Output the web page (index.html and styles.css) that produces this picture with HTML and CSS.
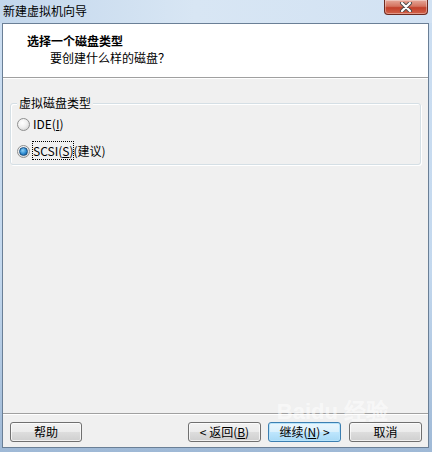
FILE: index.html
```html
<!DOCTYPE html>
<html lang="zh-CN">
<head>
<meta charset="utf-8">
<title>新建虚拟机向导</title>
<link rel="stylesheet" href="styles.css">
</head>
<body>
<div class="window">
  <div class="titlebar">
    <span class="title">新建虚拟机向导</span>
    <div class="close">
      <svg width="16" height="10" viewBox="0 0 16 10">
        <path d="M4 1 L12 9 M12 1 L4 9" stroke="#4a4a4a" stroke-width="4" stroke-linecap="round"/>
        <path d="M4 1 L12 9 M12 1 L4 9" stroke="#ffffff" stroke-width="2.2" stroke-linecap="round"/>
      </svg>
    </div>
  </div>
  <div class="client">
    <div class="header">
      <div class="h-title">选择一个磁盘类型</div>
      <div class="h-sub">要创建什么样的磁盘？</div>
    </div>
    <div class="body">
      <div class="group">
        <span class="legend">虚拟磁盘类型</span>
        <div class="radio-row">
          <span class="radio"></span>
          <span class="rlabel">IDE(<u>I</u>)</span>
        </div>
        <div class="radio-row">
          <span class="radio checked"></span>
          <span class="rlabel"><span class="focus">SCSI(<u>S</u>)</span>(建议)</span>
        </div>
      </div>
      <div class="watermark">Baidu 经验</div>
    </div>
    <div class="footer">
      <button class="btn help">帮助</button>
      <div class="spacer"></div>
      <button class="btn">&lt; 返回(<u>B</u>)</button>
      <button class="btn default">继续(<u>N</u>) &gt;</button>
      <button class="btn cancel">取消</button>
    </div>
  </div>
</div>
</body>
</html>
```
FILE: styles.css
```css
* { box-sizing: border-box; }
html, body { margin: 0; padding: 0; }
body {
  width: 432px;
  height: 452px;
  overflow: hidden;
  font-family: "Noto Sans CJK SC", "Liberation Sans", sans-serif;
  font-size: 12px;
  color: #000;
}
.window {
  width: 432px;
  height: 452px;
  display: flex;
  flex-direction: column;
  background: linear-gradient(to bottom, #cddff2 0%, #c3d8ee 60%, #9fb9d6 100%);
  padding: 0 3px 4px 2px;
}
.titlebar {
  height: 23px;
  display: flex;
  align-items: flex-start;
  justify-content: space-between;
  background: linear-gradient(to right, #c3d7ec 0%, #d8e6f4 45%, #d2e2f3 100%);
  margin: 0 -3px 0 -2px;
  padding: 0 4px 0 3px;
}
.title {
  line-height: 22px;
  font-size: 12px;
  color: #000;
}
.close {
  width: 44px;
  height: 15px;
  border: 1px solid #6d2a1f;
  border-top: none;
  border-radius: 0 0 4px 4px;
  background: linear-gradient(to bottom, #e6a899 0%, #d4735f 45%, #c2402a 55%, #d3634a 100%);
  display: flex;
  align-items: center;
  justify-content: center;
  box-shadow: inset 0 0 0 1px rgba(255,255,255,0.35);
}
.close svg { display: block; }
.client {
  flex: 1;
  display: flex;
  flex-direction: column;
  border: 1px solid #6a7f96;
  background: #f0f0f0;
}
.header {
  height: 54px;
  background: #ffffff;
  border-bottom: 1px solid #a0a0a0;
  padding: 8px 0 0 24px;
}
.h-title {
  font-weight: bold;
  line-height: 17px;
}
.h-sub {
  line-height: 17px;
  padding-left: 23px;
}
.body {
  flex: 1;
  position: relative;
  padding: 24px 7px 0 7px;
  border-top: 1px solid #ffffff;
}
.group {
  position: relative;
  height: 62px;
  border: 1px solid #d5dfe5;
  border-radius: 3px;
  box-shadow: inset 1px 1px 0 #ffffff, 1px 1px 0 #ffffff;
  padding: 13px 0 0 6px;
  display: flex;
  flex-direction: column;
  gap: 13px;
}
.legend {
  position: absolute;
  top: -9px;
  left: 6px;
  padding: 0 2px;
  background: #f0f0f0;
  line-height: 16px;
}
.radio-row {
  display: flex;
  align-items: center;
  height: 14px;
  gap: 3px;
}
.radio {
  width: 13px;
  height: 13px;
  border-radius: 50%;
  border: 1px solid #8e8f8f;
  background: radial-gradient(circle at 40% 35%, #ffffff 0%, #f0f0f0 45%, #c8c8c8 100%);
  display: flex;
  align-items: center;
  justify-content: center;
}
.radio.checked::after {
  content: "";
  width: 7px;
  height: 7px;
  border-radius: 50%;
  background: radial-gradient(circle at 40% 35%, #8fd3f8 0%, #2d8ad0 55%, #0c4e87 100%);
  border: 1px solid #1a4f80;
}
.rlabel {
  line-height: 14px;
}
.focus {
  outline: 1px dotted #000;
  outline-offset: 0;
}
u { text-decoration: underline; text-underline-offset: 1px; }
.watermark {
  position: absolute;
  right: 40px;
  bottom: -12px;
  font-family: "Liberation Sans", sans-serif;
  font-size: 22px;
  font-weight: bold;
  color: rgba(255,255,255,0.55);
  pointer-events: none;
}
.footer {
  height: 34px;
  border-top: 1px solid #a0a0a0;
  box-shadow: inset 0 1px 0 #ffffff;
  display: flex;
  align-items: flex-start;
  padding: 8px 6px 0 7px;
  gap: 7px;
}
.spacer { flex: 1; }
.btn {
  width: 73px;
  height: 20px;
  font-family: "Noto Sans CJK SC", "Liberation Sans", sans-serif;
  font-size: 12px;
  line-height: 16px;
  padding: 0;
  color: #000;
  border: 1px solid #707070;
  border-radius: 3px;
  background: linear-gradient(to bottom, #f2f2f2 0%, #ebebeb 50%, #dddddd 51%, #cfcfcf 100%);
  box-shadow: inset 0 0 0 1px rgba(255,255,255,0.7);
}
.btn.help { width: 72px; }
.btn.default {
  border-color: #3c7fb1;
  box-shadow: inset 0 0 0 1px #b8e4fb;
  background: linear-gradient(to bottom, #eaf6fd 0%, #d9f0fc 50%, #bee6fd 51%, #a7d9f5 100%);
}
.btn.cancel { margin-left: 1px; }
```
